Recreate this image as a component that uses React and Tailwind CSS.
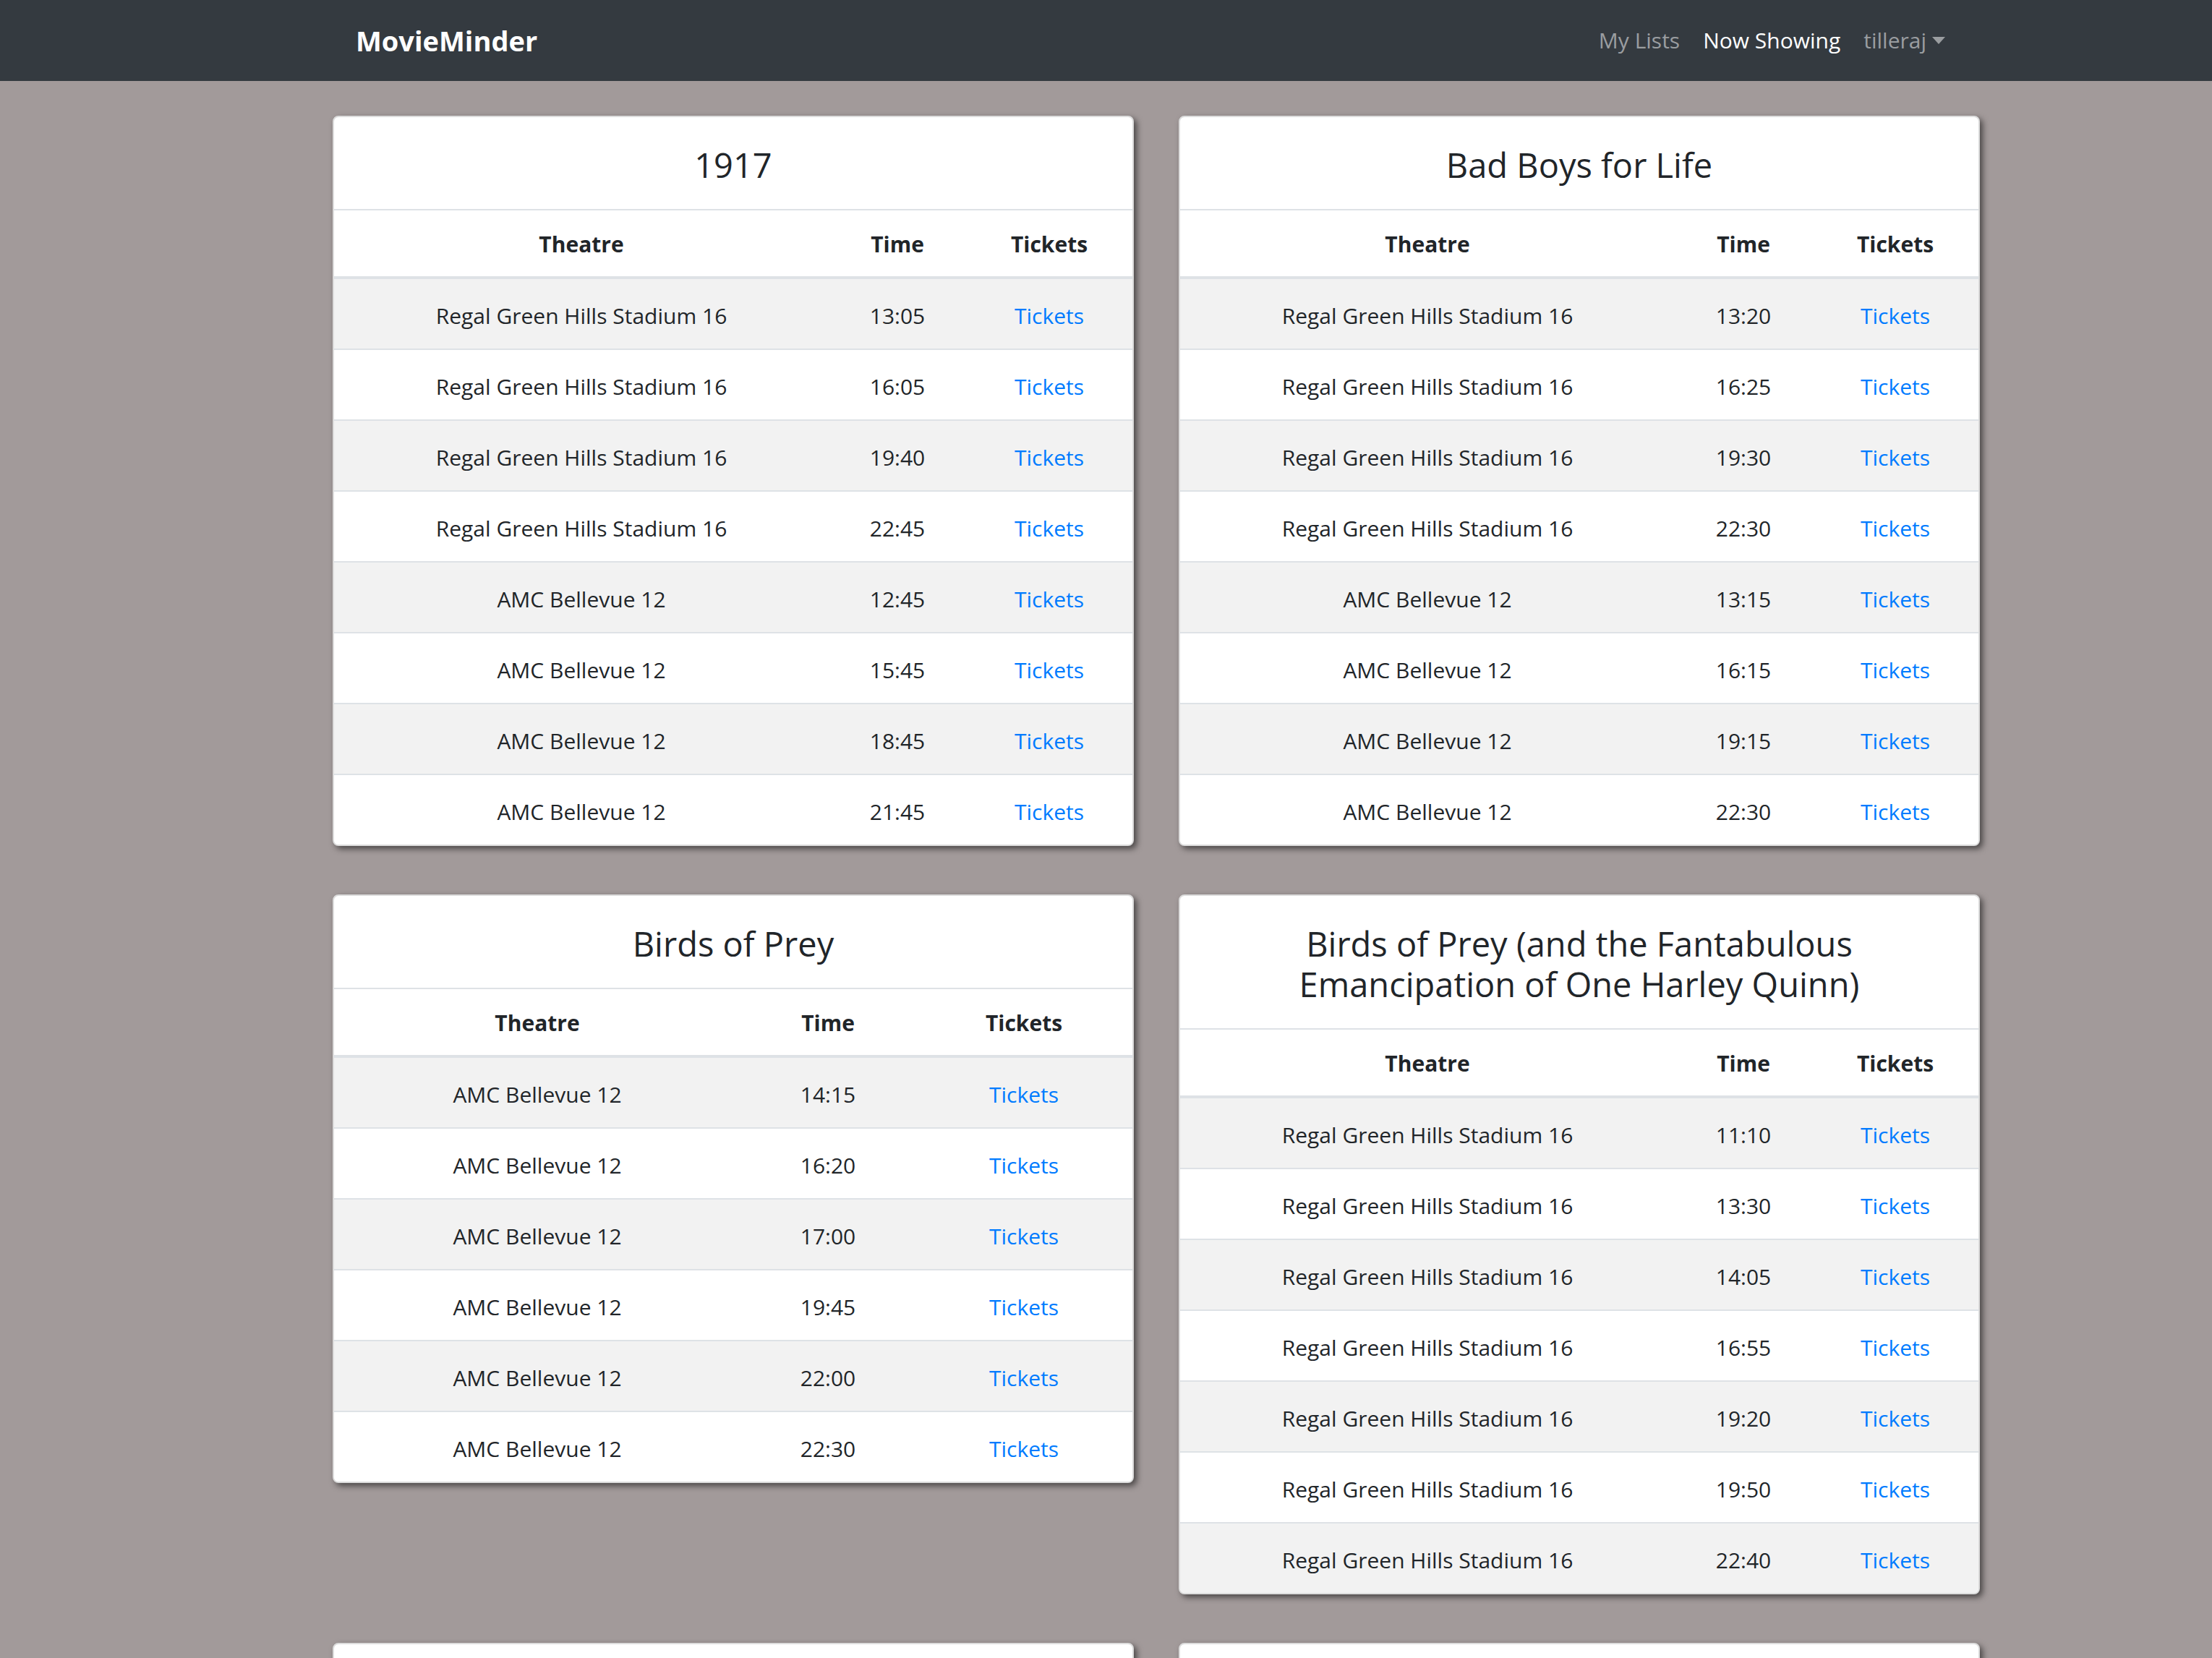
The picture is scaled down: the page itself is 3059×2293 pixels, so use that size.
import React from "react";

const R = "Regal Green Hills Stadium 16";
const A = "AMC Bellevue 12";

const movies = [
  {
    title: "1917",
    cols: "wide",
    rows: [
      [R, "13:05"], [R, "16:05"], [R, "19:40"], [R, "22:45"],
      [A, "12:45"], [A, "15:45"], [A, "18:45"], [A, "21:45"],
    ],
  },
  {
    title: "Bad Boys for Life",
    cols: "wide",
    rows: [
      [R, "13:20"], [R, "16:25"], [R, "19:30"], [R, "22:30"],
      [A, "13:15"], [A, "16:15"], [A, "19:15"], [A, "22:30"],
    ],
  },
  {
    title: "Birds of Prey",
    cols: "narrow",
    rows: [
      [A, "14:15"], [A, "16:20"], [A, "17:00"], [A, "19:45"], [A, "22:00"], [A, "22:30"],
    ],
  },
  {
    title: "Birds of Prey (and the Fantabulous Emancipation of One Harley Quinn)",
    cols: "wide",
    rows: [
      [R, "11:10"], [R, "13:30"], [R, "14:05"], [R, "16:55"], [R, "19:20"], [R, "19:50"], [R, "22:40"],
    ],
  },
  {
    title: "Dolittle",
    cols: "wide",
    rows: [[R, "12:00"], [R, "15:00"]],
  },
  {
    title: "Fantasy Island",
    cols: "wide",
    rows: [[R, "12:30"], [R, "15:30"]],
  },
];

function Card({ movie }) {
  const grid =
    movie.cols === "wide"
      ? "grid grid-cols-[684px_190px_1fr]"
      : "grid grid-cols-[562px_242px_1fr]";
  return (
    <div className="self-start bg-white border-2 border-[#dcdcdc] rounded-[8px] shadow-[4px_4px_8px_rgba(0,0,0,0.55)] overflow-hidden">
      <div className="pt-[38px] pb-[33px] px-[80px] border-b-2 border-[#dee2e6] text-center">
        <h3 className="text-[47px] leading-[56px] font-normal text-[#212529]">{movie.title}</h3>
      </div>
      <div className={`${grid} h-[95px] pt-[3px] items-center text-center font-bold text-[30px] leading-[48px] text-[#212529] border-b-4 border-[#dee2e6]`}>
        <div>Theatre</div>
        <div>Time</div>
        <div>Tickets</div>
      </div>
      {movie.rows.map((r, i) => (
        <div
          key={i}
          className={`${grid} items-center text-center text-[30px] leading-[48px] text-[#212529] pt-[5px] ${
            i === 0 ? "h-[96px]" : "h-[98px] border-t-2 border-[#dee2e6]"
          } ${i % 2 === 0 ? "bg-[#f2f2f2]" : "bg-white"}`}
        >
          <div>{r[0]}</div>
          <div>{r[1]}</div>
          <div>
            <a className="text-[#007bff]" href="#">Tickets</a>
          </div>
        </div>
      ))}
    </div>
  );
}

export default function App() {
  return (
    <div className="min-h-screen bg-[#a29a9a] font-['Open_Sans',sans-serif] text-[#212529]">
      <nav className="bg-[#343a40] h-[112px]">
        <div className="ml-[460px] w-[2278px] h-full px-[32px] flex items-center justify-between">
          <a href="#" className="text-white font-bold text-[38px] leading-[60px]">MovieMinder</a>
          <div className="flex items-center text-[30px] leading-[48px]">
            <a href="#" className="px-[16px] text-[#9a9da0]">My Lists</a>
            <a href="#" className="px-[16px] text-white">Now Showing</a>
            <a href="#" className="px-[16px] text-[#9a9da0]">
              tilleraj
              <span className="inline-block ml-[8px] align-[6px] border-t-[10px] border-t-current border-x-[9px] border-x-transparent border-b-0" />
            </a>
          </div>
        </div>
      </nav>
      <div className="pl-[460px] pt-[48px]">
        <div className="grid grid-cols-[1108px_1108px] gap-x-[62px] gap-y-[67px]">
          {movies.map((m) => (
            <Card key={m.title} movie={m} />
          ))}
        </div>
      </div>
    </div>
  );
}
